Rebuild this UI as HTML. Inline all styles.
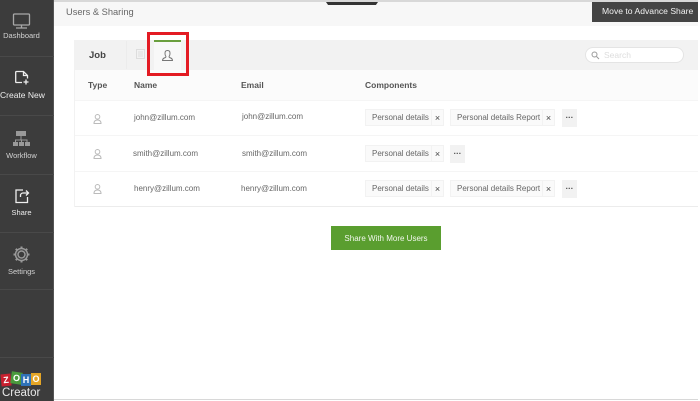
<!DOCTYPE html>
<html>
<head>
<meta charset="utf-8">
<style>
html,body{margin:0;padding:0;width:700px;height:401px;overflow:hidden;background:#fff}
body{font-family:"Liberation Sans",sans-serif;position:relative}
.a{position:absolute}
.t{position:absolute;white-space:nowrap;line-height:12px}
.side{left:0;top:0;width:54px;height:401px;background:#3c3c3c;border-right:1px solid #555;box-sizing:border-box}
.div{left:0;width:54px;height:1px;background:#494949}
.sl{position:absolute;left:0;width:43px;text-align:center;font-size:7.5px;line-height:10px;color:#d2d2d2;white-space:nowrap}
.cell{font-size:8px;color:#666}
.hd{font-size:8.5px;font-weight:bold;color:#555}
.tag{position:absolute;height:17px;background:#fafafa;border:1px solid #f2f2f2;box-sizing:border-box;font-size:8px;line-height:16px;color:#666;white-space:nowrap;padding-left:6px}
.tag i{position:absolute;right:0;top:0;width:11px;height:15px;border-left:1px solid #f2f2f2;font-style:normal;color:#444;text-align:center;font-size:9px;line-height:17px}
.more{position:absolute;width:15px;height:18px;background:#f2f2f2;color:#444;font-size:8px;line-height:14px;letter-spacing:.4px;text-align:center;font-weight:bold}
.line{left:75px;width:623px;height:1px;background:#f5f5f5}
</style>
</head>
<body>
<div class="a" style="left:54px;top:0;width:646px;height:2px;background:#d8d8d8"></div>
<div class="a" style="left:54px;top:2px;width:646px;height:24px;background:#f7f7f7"></div>
<div class="t" style="left:66px;top:6px;font-size:9.3px;color:#666">Users &amp; Sharing</div>
<div class="a" style="left:326px;top:2px;width:52px;height:3px;background:#333;clip-path:polygon(0 0,100% 0,96% 100%,4% 100%)"></div>
<div class="a" style="left:592px;top:2px;width:106px;height:20px;background:#444;color:#f2f2f2;font-size:8.6px;line-height:19px;white-space:nowrap;box-sizing:border-box;padding-left:10px">Move to Advance Share</div>
<div class="a" style="left:698px;top:0;width:2px;height:401px;background:#fff"></div>

<div class="a side"></div>
<div class="a div" style="top:56px"></div>
<div class="a div" style="top:115px"></div>
<div class="a div" style="top:174px"></div>
<div class="a div" style="top:232px"></div>
<div class="a div" style="top:289px"></div>
<div class="a div" style="top:357px"></div>
<svg class="a" style="left:0;top:0" width="54" height="401" fill="none">
<g stroke="#a8a8a8" stroke-width="1.3">
<rect x="13.5" y="14" width="16" height="11" rx="1"/>
<path d="M21.5 25v2.5M16 28h11"/>
</g>
<g stroke="#eee" stroke-width="1.3">
<path d="M22 82.500h-5.500a.8.800 0 0 1-.8-.8V72.300a.8.800 0 0 1 .8-.8h7l4 4v3"/>
<path d="M23.500 71.500v4h4"/>
<path d="M26 79.500v5M23.500 82h5"/>
</g>
<g fill="#999">
<rect x="16" y="131" width="10" height="5"/>
<rect x="13" y="142" width="5" height="4"/>
<rect x="19" y="142" width="5" height="4"/>
<rect x="25" y="142" width="5" height="4"/>
</g>
<path d="M21 136v4M15.500 142v-2h11.500v2M21.500 140v2" stroke="#999"/>
<g stroke="#eee" stroke-width="1.3">
<path d="M27.500 197v5.500h-11.500V190h7"/>
<path d="M20.500 197v-1.500a2.500 2.500 0 0 1 2.500-2.500h5M26 190.500l2.500 2.500-2.500 2.500"/>
</g>
<g stroke="#999">
<circle cx="21.500" cy="254.500" r="3.500" stroke-width="1.500"/>
<circle cx="21.500" cy="254.500" r="6" stroke-width="1.500"/>
<path d="M21.500 246.500v2M21.500 260.500v2M13.500 254.500h2M27.500 254.500h2M15.800 248.800l1.500 1.500M25.700 258.700l1.500 1.500M15.800 260.200l1.500-1.500M25.700 250.300l1.500-1.500" stroke-width="2"/>
</g>
</svg>
<div class="sl" style="top:31px">Dashboard</div>
<div class="sl" style="top:90px;font-size:8.5px;color:#eee">Create New</div>
<div class="sl" style="top:151px">Workflow</div>
<div class="sl" style="top:208px;color:#eee">Share</div>
<div class="sl" style="top:267px">Settings</div>
<div class="a" style="left:1px;top:374px;width:10px;height:12px;background:#c8202f;transform:rotate(-6deg);color:#fff;font-size:9px;font-weight:bold;line-height:12px;text-align:center">Z</div>
<div class="a" style="left:11px;top:372px;width:11px;height:12px;background:#4a9a3c;transform:rotate(8deg);color:#fff;font-size:9px;font-weight:bold;line-height:12px;text-align:center">O</div>
<div class="a" style="left:21px;top:374px;width:10px;height:12px;background:#2f72b8;color:#fff;font-size:9px;font-weight:bold;line-height:12px;text-align:center">H</div>
<div class="a" style="left:31px;top:373px;width:10px;height:12px;background:#e4a526;color:#fff;font-size:9px;font-weight:bold;line-height:12px;text-align:center">O</div>
<div class="t" style="left:2px;top:387px;font-size:11.5px;color:#e8e8e8">Creator</div>
<div class="a" style="left:54px;top:399px;width:644px;height:1px;background:#d8d8d8"></div>

<div class="a" style="left:74px;top:40px;width:624px;height:30px;background:#f2f2f2"></div>
<div class="a" style="left:74px;top:70px;width:624px;height:30px;background:#fbfbfb"></div>
<div class="a" style="left:74px;top:40px;width:1px;height:167px;background:#f2f2f2"></div>
<div class="a" style="left:126px;top:41px;width:1px;height:28px;background:#ececec"></div>
<div class="t" style="left:89px;top:50px;font-size:9.5px;font-weight:bold;color:#444">Job</div>
<svg class="a" style="left:136px;top:49px" width="10" height="11" fill="none" stroke="#ddd"><rect x=".5" y=".5" width="8" height="9"/><path d="M2 3h5M2 5h5M2 7h5"/></svg>
<div class="a" style="left:154px;top:41px;width:27px;height:28px;background:#f8f8f8;border-top:1px solid #6a9f3e"></div>
<div class="a" style="left:154px;top:40px;width:27px;height:2px;background:#6a9f3e"></div>
<svg class="a" style="left:162px;top:50px" width="11" height="11" fill="none" stroke="#777"><path d="M.5 10.500c0-2 1.500-2.500 3-3 .5-.3.500-1 .2-1.400C3 5.200 3 4 3 3.200 3 1.500 4 .5 5.500 .5S8 1.500 8 3.200c0 .8 0 2-.7 2.900-.3.400-.3 1.100.2 1.400 1.500.5 3 1 3 3z"/></svg>
<div class="a" style="left:147px;top:32px;width:42px;height:44px;box-sizing:border-box;border:3px solid #e31b23"></div>

<div class="a" style="left:585px;top:47px;width:99px;height:16px;box-sizing:border-box;background:#fff;border:1px solid #e4e4e4;border-radius:8px"></div>
<svg class="a" style="left:591px;top:51px" width="9" height="9" fill="none" stroke="#999"><circle cx="3.500" cy="3.500" r="2.500"/><path d="M5.500 5.500l2.500 2.500"/></svg>
<div class="t" style="left:604px;top:49px;font-size:8.5px;color:#ddd">Search</div>

<div class="t hd" style="left:88px;top:79px">Type</div>
<div class="t hd" style="left:134px;top:79px">Name</div>
<div class="t hd" style="left:241px;top:79px">Email</div>
<div class="t hd" style="left:365px;top:79px">Components</div>

<div class="a line" style="top:100px"></div>
<div class="a line" style="top:135px"></div>
<div class="a line" style="top:171px"></div>
<div class="a" style="left:75px;top:206px;width:623px;height:1px;background:#ececec"></div>

<svg class="a" style="left:93px;top:114px" width="10" height="10" fill="none" stroke="#bbb"><circle cx="4.500" cy="2.800" r="2.300"/><path d="M1 9.500c0-2.500 1-3.500 3.500-3.500s3.500 1 3.500 3.500z"/></svg>
<svg class="a" style="left:93px;top:149px" width="10" height="10" fill="none" stroke="#bbb"><circle cx="4.500" cy="2.800" r="2.300"/><path d="M1 9.500c0-2.500 1-3.500 3.500-3.500s3.500 1 3.500 3.500z"/></svg>
<svg class="a" style="left:93px;top:184px" width="10" height="10" fill="none" stroke="#bbb"><circle cx="4.500" cy="2.800" r="2.300"/><path d="M1 9.500c0-2.500 1-3.500 3.500-3.500s3.500 1 3.500 3.500z"/></svg>

<div class="t cell" style="left:134px;top:112px">john@zillum.com</div>
<div class="t cell" style="left:242px;top:111px">john@zillum.com</div>
<div class="t cell" style="left:133px;top:148px">smith@zillum.com</div>
<div class="t cell" style="left:242px;top:148px">smith@zillum.com</div>
<div class="t cell" style="left:134px;top:183px">henry@zillum.com</div>
<div class="t cell" style="left:241px;top:183px">henry@zillum.com</div>

<div class="tag" style="left:365px;top:109px;width:79px">Personal details<i>×</i></div>
<div class="tag" style="left:450px;top:109px;width:105px">Personal details Report<i>×</i></div>
<div class="more" style="left:562px;top:109px">...</div>
<div class="tag" style="left:365px;top:145px;width:79px">Personal details<i>×</i></div>
<div class="more" style="left:450px;top:145px">...</div>
<div class="tag" style="left:365px;top:180px;width:79px">Personal details<i>×</i></div>
<div class="tag" style="left:450px;top:180px;width:105px">Personal details Report<i>×</i></div>
<div class="more" style="left:562px;top:180px">...</div>

<div class="a" style="left:331px;top:226px;width:110px;height:24px;background:#5a9e2f;color:#f2f7ee;font-size:8px;line-height:25px;text-align:center;white-space:nowrap">Share With More Users</div>
</body>
</html>
